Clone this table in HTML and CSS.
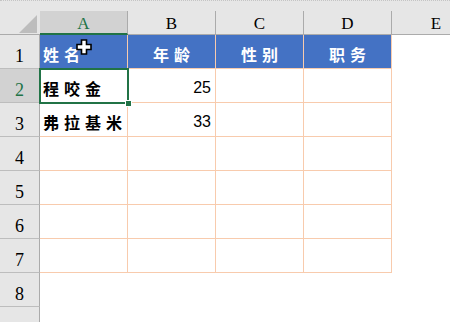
FILE: index.html
```html
<!DOCTYPE html>
<html lang="zh">
<head>
<meta charset="utf-8">
<link rel="stylesheet" href="styles.css">
</head>
<body>
<div class="app">
  <div class="topbar"></div>
  <div class="sheet">
    <div class="corner"><svg class="tri" width="40" height="24" viewBox="0 0 40 24"><polygon points="37,4 37,22 19,22" fill="#bdbdbd"/></svg></div>
    <div class="colhead sel">A</div>
    <div class="colhead">B</div>
    <div class="colhead">C</div>
    <div class="colhead">D</div>
    <div class="colhead last">E</div>

    <div class="rowhead">1</div>
    <div class="cell b hdr left">姓名</div>
    <div class="cell b hdr">年龄</div>
    <div class="cell b hdr">性别</div>
    <div class="cell b hdr">职务</div>
    <div class="cell"></div>

    <div class="rowhead sel">2</div>
    <div class="cell b txt">程咬金</div>
    <div class="cell b num">25</div>
    <div class="cell b"></div>
    <div class="cell b"></div>
    <div class="cell"></div>

    <div class="rowhead">3</div>
    <div class="cell b txt">弗拉基米</div>
    <div class="cell b num">33</div>
    <div class="cell b"></div>
    <div class="cell b"></div>
    <div class="cell"></div>

    <div class="rowhead">4</div>
    <div class="cell b"></div><div class="cell b"></div><div class="cell b"></div><div class="cell b"></div><div class="cell"></div>
    <div class="rowhead">5</div>
    <div class="cell b"></div><div class="cell b"></div><div class="cell b"></div><div class="cell b"></div><div class="cell"></div>
    <div class="rowhead">6</div>
    <div class="cell b"></div><div class="cell b"></div><div class="cell b"></div><div class="cell b"></div><div class="cell"></div>
    <div class="rowhead">7</div>
    <div class="cell b"></div><div class="cell b"></div><div class="cell b"></div><div class="cell b"></div><div class="cell"></div>
    <div class="rowhead">8</div>
    <div class="cell"></div><div class="cell"></div><div class="cell"></div><div class="cell"></div><div class="cell"></div>
    <div class="rowhead"></div>
    <div class="cell"></div><div class="cell"></div><div class="cell"></div><div class="cell"></div><div class="cell"></div>
  </div>
  <div class="selection"><span class="handle"></span></div>
  <svg class="cursor" width="16" height="16" viewBox="0 0 16 16"><polygon points="5.5,1 10.5,1 10.5,5.5 15,5.5 15,10.5 10.5,10.5 10.5,15 5.5,15 5.5,10.5 1,10.5 1,5.5 5.5,5.5" fill="#fff" stroke="#000" stroke-width="1.6" stroke-linejoin="miter"/></svg>
</div>
</body>
</html>
```
FILE: styles.css
```css
html, body {
  margin: 0;
  padding: 0;
  background: #fff;
  overflow: hidden;
}
.app {
  position: relative;
  width: 450px;
  height: 322px;
  overflow: hidden;
}
.topbar {
  height: 11px;
  box-sizing: border-box;
  background: #e6e6e6;
  border-top: 1px dotted #c4c4c4;
}
.sheet {
  display: grid;
  grid-template-columns: 40px 88px 88px 88px 88px 88px;
  grid-template-rows: 24px repeat(8, 34px) 34px;
  width: 480px;
}
.sheet > div {
  box-sizing: border-box;
}
.corner {
  background: #e6e6e6;
  border-bottom: 1px solid #ababab;
  position: relative;
}
.tri {
  display: block;
}
.colhead {
  background: #e6e6e6;
  border-right: 1px solid #ababab;
  border-bottom: 1px solid #ababab;
  font-family: "Liberation Serif", serif;
  font-size: 17px;
  color: #000;
  display: flex;
  align-items: center;
  justify-content: center;
  padding-top: 3px;
}
.colhead.sel {
  background: #d2d2d2;
  color: #217346;
  border-bottom: 2px solid #217346;
}
.colhead.last {
  border-right: none;
}
.rowhead {
  background: #e6e6e6;
  border-right: 1px solid #ababab;
  border-bottom: 1px solid #bdbdbd;
  font-family: "Liberation Serif", serif;
  font-size: 18px;
  line-height: 18px;
  color: #000;
  display: flex;
  align-items: flex-end;
  justify-content: center;
  padding-bottom: 3px;
}
.rowhead.sel {
  background: #d2d2d2;
  color: #217346;
}
.cell {
  display: flex;
  align-items: flex-end;
  font-family: "Noto Sans CJK SC", sans-serif;
  font-weight: 700;
  font-size: 16px;
  line-height: 17px;
  padding-bottom: 5px;
  white-space: nowrap;
  overflow: hidden;
}
.cell.b {
  border-right: 1px solid #f8cbad;
  border-bottom: 1px solid #f8cbad;
}
.hdr {
  background: #4472c4;
  color: #fff;
  justify-content: center;
  letter-spacing: 5px;
  padding-left: 5px;
}
.hdr.left {
  justify-content: flex-start;
  padding-left: 3px;
}
.txt {
  color: #000;
  letter-spacing: 5px;
  padding-left: 3px;
}
.num {
  justify-content: flex-end;
  font-family: "Liberation Sans", sans-serif;
  font-weight: 400;
  font-size: 16px;
  padding-right: 4px;
  padding-bottom: 6px;
  color: #000;
}
.selection {
  position: absolute;
  left: 39px;
  top: 68px;
  width: 90px;
  height: 36px;
  box-sizing: border-box;
  border: 2px solid #217346;
}
.handle {
  position: absolute;
  right: -5px;
  bottom: -5px;
  width: 5px;
  height: 5px;
  background: #217346;
  border: 1px solid #fff;
}
.cursor {
  position: absolute;
  left: 76px;
  top: 39px;
}
```
